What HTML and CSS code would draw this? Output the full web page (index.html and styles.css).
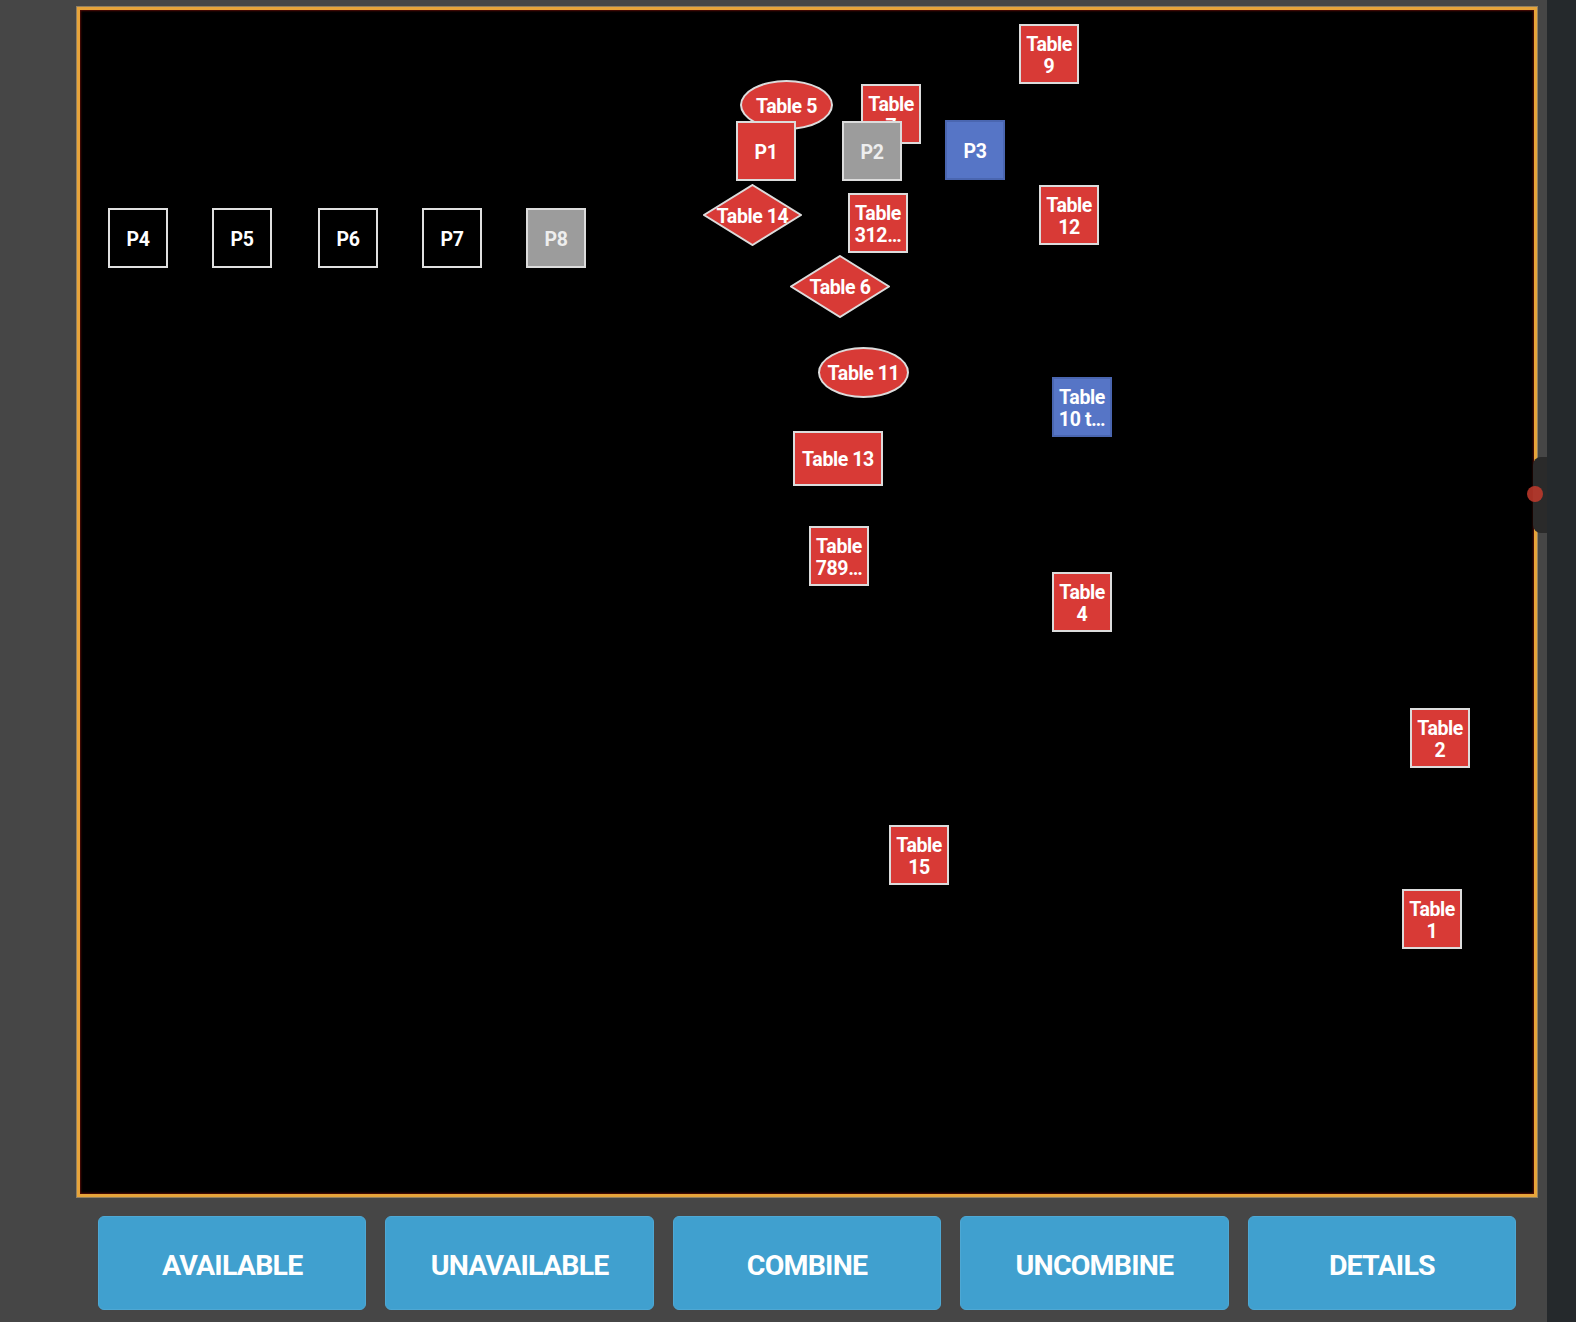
FILE: index.html
```html
<!DOCTYPE html>
<html>
<head>
<meta charset="utf-8">
<link rel="stylesheet" href="styles.css">
</head>
<body>
<div class="app">
  <div class="main">
    <div class="floor">
      <div class="node sq red" style="left:939px;top:14px">Table<br>9</div>
      <div class="node ell red" style="left:660px;top:70px;width:93px;height:50px">Table 5</div>
      <div class="node sq red" style="left:781px;top:74px">Table<br>7</div>
      <div class="node sq red" style="left:656px;top:111px">P1</div>
      <div class="node sq gray" style="left:762px;top:111px">P2</div>
      <div class="node sq blue" style="left:865px;top:110px">P3</div>
      <div class="node dia" style="left:623px;top:174px;width:99px;height:62px">
        <svg class="dia-bg" viewBox="0 0 99 62" preserveAspectRatio="none"><polygon points="49.5,1 98,31 49.5,61 1,31" /></svg>
        <span>Table 14</span>
      </div>
      <div class="node sq red" style="left:768px;top:183px">Table<br>312…</div>
      <div class="node sq red" style="left:959px;top:175px">Table<br>12</div>
      <div class="node dia" style="left:710px;top:245px;width:100px;height:63px">
        <svg class="dia-bg" viewBox="0 0 100 63" preserveAspectRatio="none"><polygon points="50,1 99,31.5 50,62 1,31.5" /></svg>
        <span>Table 6</span>
      </div>
      <div class="node ell red" style="left:738px;top:337px;width:91px;height:51px">Table 11</div>
      <div class="node sq blue" style="left:972px;top:367px">Table<br>10 t…</div>
      <div class="node sq red" style="left:713px;top:421px;width:90px;height:55px">Table 13</div>
      <div class="node sq red" style="left:729px;top:516px">Table<br>789…</div>
      <div class="node sq red" style="left:972px;top:562px">Table<br>4</div>
      <div class="node sq red" style="left:1330px;top:698px">Table<br>2</div>
      <div class="node sq red" style="left:809px;top:815px">Table<br>15</div>
      <div class="node sq red" style="left:1322px;top:879px">Table<br>1</div>
      <div class="node sq black" style="left:28px;top:198px">P4</div>
      <div class="node sq black" style="left:132px;top:198px">P5</div>
      <div class="node sq black" style="left:238px;top:198px">P6</div>
      <div class="node sq black" style="left:342px;top:198px">P7</div>
      <div class="node sq gray" style="left:446px;top:198px">P8</div>
    </div>
    <div class="actions">
      <button class="btn">AVAILABLE</button>
      <button class="btn">UNAVAILABLE</button>
      <button class="btn">COMBINE</button>
      <button class="btn">UNCOMBINE</button>
      <button class="btn">DETAILS</button>
    </div>
  </div>
  <div class="side"></div>
  <div class="edge-tab"><div class="edge-dot"></div></div>
</div>
</body>
</html>
```
FILE: styles.css
```css
html, body {
  margin: 0;
  padding: 0;
  background: #464646;
  width: 1576px;
  height: 1322px;
  overflow: hidden;
  font-family: Roboto, "Liberation Sans", sans-serif;
}
.app {
  display: flex;
  width: 1576px;
  height: 1322px;
  position: relative;
}
.main {
  width: 1547px;
  display: flex;
  flex-direction: column;
}
.side {
  width: 29px;
  background: #25292c;
}
.floor {
  position: relative;
  margin: 7px 0 0 77px;
  width: 1454px;
  height: 1184px;
  border: 3px solid #e7a43a;
  box-shadow: 0 0 0 1px rgba(240, 200, 130, 0.45), inset 0 0 2px 1px rgba(140, 20, 10, 0.6);
  background: #000;
}
.node {
  position: absolute;
  box-sizing: border-box;
  width: 60px;
  height: 60px;
  padding-top: 3px;
  display: flex;
  align-items: center;
  justify-content: center;
  text-align: center;
  color: #fff;
  font-weight: 700;
  font-size: 19.5px;
  line-height: 22px;
  letter-spacing: -0.4px;
}
.sq {
  border: 2px solid #dcdcdc;
}
.red {
  background: #d83a36;
}
.gray {
  background: #9c9c9c;
  color: #eee;
}
.blue {
  background: #5675c6;
  border-color: #4a66b0;
}
.black {
  background: #000;
  border-color: #e0e0e0;
}
.ell {
  border: 2px solid #dcdcdc;
  border-radius: 50%;
}
.dia {
  background: transparent;
}
.dia-bg {
  position: absolute;
  left: 0;
  top: 0;
  width: 100%;
  height: 100%;
}
.dia-bg polygon {
  fill: #d83a36;
  stroke: #dcdcdc;
  stroke-width: 2;
}
.dia span {
  position: relative;
  white-space: nowrap;
}
.actions {
  display: flex;
  gap: 19px;
  margin: 19px 0 0 98px;
  width: 1418px;
}
.btn {
  flex: 1;
  height: 94px;
  border: 1px solid #4ea8d4;
  border-radius: 6px;
  background: #40a0cf;
  color: #fff;
  font-family: Roboto, "Liberation Sans", sans-serif;
  font-weight: 700;
  font-size: 28.5px;
  letter-spacing: -0.8px;
  padding: 4px 0 0 0;
}
.edge-tab {
  position: absolute;
  left: 1533px;
  top: 457px;
  width: 14px;
  height: 76px;
  background: #2a2a2a;
  border-radius: 8px 0 0 8px;
}
.edge-dot {
  position: absolute;
  left: -6px;
  top: 29px;
  width: 16px;
  height: 16px;
  border-radius: 50%;
  background: #c33a2c;
  opacity: 0.85;
}
```
